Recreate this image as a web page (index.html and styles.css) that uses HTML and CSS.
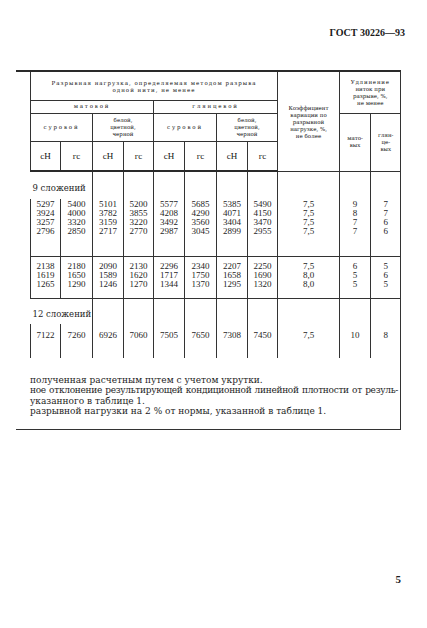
FILE: index.html
```html
<!DOCTYPE html>
<html lang="ru">
<head>
<meta charset="utf-8">
<title>ГОСТ 30226—93</title>
<link rel="stylesheet" href="styles.css">
</head>
<body>
<div class="page">
  <div class="doc-header">ГОСТ 30226—93</div>
  <div class="frame">
    <table class="spec">
      <colgroup>
        <col class="c1"><col class="c2"><col class="c3"><col class="c4">
        <col class="c5"><col class="c6"><col class="c7"><col class="c8">
        <col class="c9"><col class="c10"><col class="c11">
      </colgroup>
      <thead>
        <tr class="h1">
          <th colspan="8" class="wide">Разрывная нагрузка, определяемая методом разрыва<br>одной нити, не менее</th>
          <th rowspan="4" class="koef">Коэффициент<br>вариации по<br>разрывной<br>нагрузке, %,<br>не более</th>
          <th colspan="2" rowspan="2" class="udl end"><span class="sp">Удлинение</span><br>ниток при<br>разрыве, %,<br>не менее</th>
        </tr>
        <tr class="h2">
          <th colspan="4" class="sp2">матовой</th>
          <th colspan="4" class="sp2">глянцевой</th>
        </tr>
        <tr class="h3">
          <th colspan="2" class="sp2">суровой</th>
          <th colspan="2">белой,<br>цветной,<br>черной</th>
          <th colspan="2" class="sp2">суровой</th>
          <th colspan="2">белой,<br>цветной,<br>черной</th>
          <th rowspan="2">мато-<br>вых</th>
          <th rowspan="2" class="end">глян-<br>це-<br>вых</th>
        </tr>
        <tr class="h4">
          <th class="unit">сН</th><th class="unit">гс</th>
          <th class="unit">сН</th><th class="unit">гс</th>
          <th class="unit">сН</th><th class="unit">гс</th>
          <th class="unit">сН</th><th class="unit">гс</th>
        </tr>
      </thead>
      <tbody>
        <tr class="label">
          <td colspan="2" class="group">9 сложений</td>
          <td></td><td></td><td></td><td></td><td></td><td></td><td></td><td></td><td class="end"></td>
        </tr>
        <tr class="block b1">
          <td>5297<br>3924<br>3257<br>2796</td>
          <td>5400<br>4000<br>3320<br>2850</td>
          <td>5101<br>3782<br>3159<br>2717</td>
          <td>5200<br>3855<br>3220<br>2770</td>
          <td>5577<br>4208<br>3492<br>2987</td>
          <td>5685<br>4290<br>3560<br>3045</td>
          <td>5385<br>4071<br>3404<br>2899</td>
          <td>5490<br>4150<br>3470<br>2955</td>
          <td>7,5<br>7,5<br>7,5<br>7,5</td>
          <td>9<br>8<br>7<br>7</td>
          <td class="end">7<br>7<br>6<br>6</td>
        </tr>
        <tr class="block b2 sep">
          <td>2138<br>1619<br>1265</td>
          <td>2180<br>1650<br>1290</td>
          <td>2090<br>1589<br>1246</td>
          <td>2130<br>1620<br>1270</td>
          <td>2296<br>1717<br>1344</td>
          <td>2340<br>1750<br>1370</td>
          <td>2207<br>1658<br>1295</td>
          <td>2250<br>1690<br>1320</td>
          <td>7,5<br>8,0<br>8,0</td>
          <td>6<br>5<br>5</td>
          <td class="end">5<br>6<br>5</td>
        </tr>
        <tr class="label sep">
          <td colspan="2" class="group">12 сложений</td>
          <td></td><td></td><td></td><td></td><td></td><td></td><td></td><td></td><td class="end"></td>
        </tr>
        <tr class="block b3">
          <td>7122</td>
          <td>7260</td>
          <td>6926</td>
          <td>7060</td>
          <td>7505</td>
          <td>7650</td>
          <td>7308</td>
          <td>7450</td>
          <td>7,5</td>
          <td>10</td>
          <td class="end">8</td>
        </tr>
      </tbody>
    </table>
    <div class="notes">
      <div class="line">полученная расчетным путем с учетом укрутки.</div>
      <div class="line just">ное отклонение результирующей кондиционной линейной плотности от резуль-</div>
      <div class="line">указанного в таблице 1.</div>
      <div class="line">разрывной нагрузки на 2 % от нормы, указанной в таблице 1.</div>
    </div>
  </div>
  <div class="page-num">5</div>
</div>
</body>
</html>
```

FILE: styles.css
```css
* { box-sizing: border-box; }
html, body { margin: 0; padding: 0; background: #fff; }
body {
  width: 427px;
  height: 628px;
  overflow: hidden;
  color: #1e1e1e;
  font-family: "DejaVu Serif", serif;
}
.page { padding: 27px 24px 0 16px; }
.doc-header {
  text-align: right;
  margin-right: -2px;
  font: bold 10px/12px "Liberation Serif", serif;
  color: #1a1a1a;
}
.frame {
  margin-top: 31px;
  width: 385px;
  border-top: 2px solid #2a2a2a;
  border-right: 1px solid #333;
  border-bottom: 1px solid #333;
  padding: 0 0 13px 14px;
}
.spec {
  border-collapse: collapse;
  table-layout: fixed;
  width: 370px;
}
.c1 { width: 30px; } .c2 { width: 32px; } .c3 { width: 31px; } .c4 { width: 30px; }
.c5 { width: 31px; } .c6 { width: 32px; } .c7 { width: 31px; } .c8 { width: 30px; }
.c9 { width: 62px; } .c10 { width: 31px; } .c11 { width: 30px; }

.spec th {
  font-weight: normal;
  font-size: 5.5px;
  line-height: 7px;
  color: #111;
  border: 1px solid #333;
  padding: 0;
  text-align: center;
  vertical-align: middle;
}
.spec .h1 th { border-top: none; padding-top: 2px; }
.spec .end { border-right: none; }
.h1 { height: 28px; }
.h2 { height: 13px; }
.h3 { height: 28px; }
.h4 { height: 30px; }
.spec .h4 th { border-bottom: 2px solid #2a2a2a; }
.wide { letter-spacing: 1px; }
.sp { letter-spacing: 0.8px; }
.sp2 { letter-spacing: 1.8px; }
.spec th.unit { font: 9px/10px "Liberation Serif", serif; }

.spec td {
  border-left: 1px solid #333;
  border-right: 1px solid #333;
  padding: 0;
  text-align: center;
  vertical-align: top;
  font: 9px/9px "Liberation Serif", serif;
}
.spec td.end { border-right: none; }
.spec .sep td { border-top: 1px solid #333; }
.label { height: 28px; }
.spec td.group {
  border-left: none;
  text-align: left;
  vertical-align: middle;
  padding: 5px 0 0 2px;
  font: 8.5px/10px "DejaVu Serif", serif;
}
.b1 { height: 57px; }
.b1 td { padding-top: 1px; }
.b2 { height: 42px; }
.b2 td { padding-top: 5px; }
.label.sep { height: 26px; }
.b3 { height: 34px; }
.b3 td { padding-top: 7px; }

.notes {
  margin-top: 17px;
  width: 368px;
  font-size: 9px;
  line-height: 10.3px;
}
.notes .line { white-space: nowrap; }
.notes .just {
  white-space: normal;
  letter-spacing: -0.3px;
  text-align: justify;
  text-align-last: justify;
}
.page-num {
  margin-top: 143px;
  margin-right: 2px;
  text-align: right;
  font: bold 11px/12px "Liberation Serif", serif;
}
```
